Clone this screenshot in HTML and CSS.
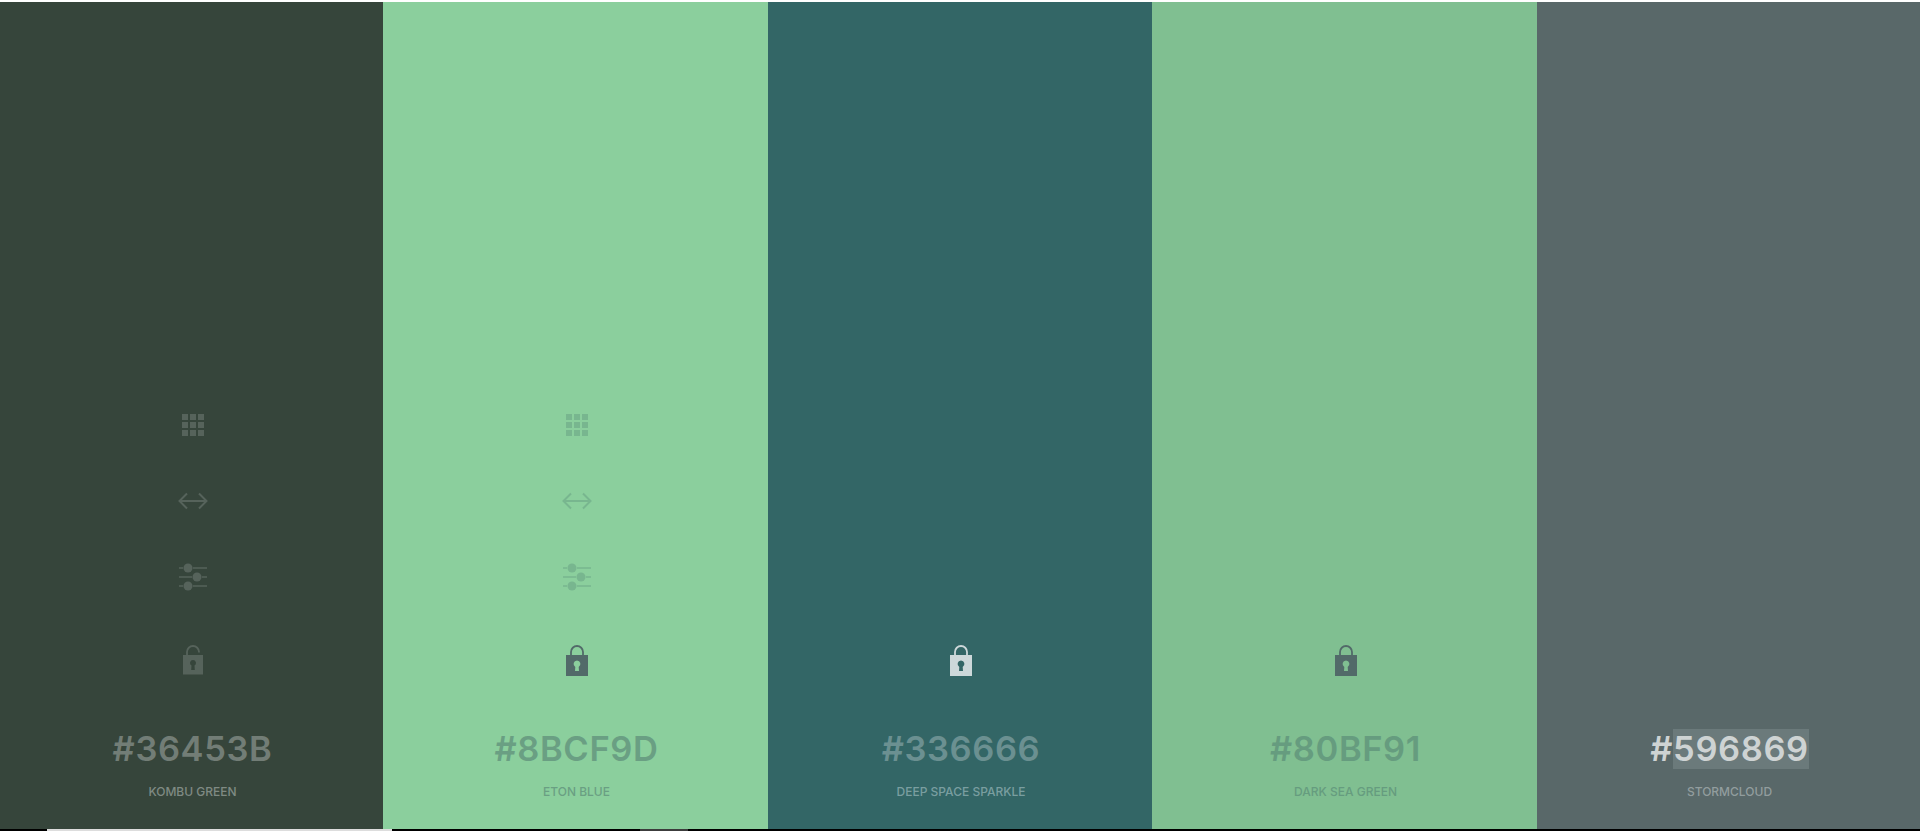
FILE: index.html
```html
<!DOCTYPE html>
<html lang="en">
<head>
    <meta charset="UTF-8">
    <meta name="viewport" content="width=device-width, initial-scale=1.0">
    <title>Palette</title>
    <link rel="stylesheet" href="styles.css">
</head>
<body>
    <svg class="defs" width="0" height="0" aria-hidden="true">
        <symbol id="i-grid" viewBox="0 0 22 22">
            <path d="M0 0h6v6H0zM8 0h6v6H8zM16 0h6v6h-6zM0 8h6v6H0zM8 8h6v6H8zM16 8h6v6h-6zM0 16h6v6H0zM8 16h6v6H8zM16 16h6v6h-6z"/>
        </symbol>
        <symbol id="i-arrows" viewBox="0 0 30 18">
            <path d="M9 1.500 1.500 9 9 16.500M21 1.500 28.500 9 21 16.500M1.500 9h27" fill="none" stroke="currentColor" stroke-width="2"/>
        </symbol>
        <symbol id="i-sliders" viewBox="0 0 28 28">
            <path d="M0 5h4M14 5h14M0 14h13M23 14h5M0 23h4M14 23h14" fill="none" stroke="currentColor" stroke-width="1.500"/>
            <circle cx="9" cy="5" r="4.500"/>
            <circle cx="18" cy="14" r="4.500"/>
            <circle cx="9" cy="23" r="4.500"/>
        </symbol>
        <symbol id="i-lock" viewBox="0 0 22 31">
            <path d="M5 11V7a6 6 0 0 1 12 0v4" fill="none" stroke="currentColor" stroke-width="1.800"/>
            <path fill-rule="evenodd" d="M0 10h22v21H0zM11 15.500a3.500 3.500 0 0 0-1.700 6.500L9 26h4l-.3-4a3.500 3.500 0 0 0-1.700-6.500z"/>
        </symbol>
        <symbol id="i-lock-open" viewBox="0 0 22 31">
            <path d="M5 10V7a6 6 0 0 1 12 0v.500" fill="none" stroke="currentColor" stroke-width="1.800"/>
            <path fill-rule="evenodd" d="M1 10h20v19.500H1zM11 15a3 3 0 0 0-1.500 5.600L9.200 25h3.600l-.3-4.400A3 3 0 0 0 11 15z"/>
        </symbol>
    </svg>

    <main class="palette">
        <section class="swatch kombu">
            <div class="tool"><svg class="ico grid"><use href="#i-grid"/></svg></div>
            <div class="tool"><svg class="ico arrows"><use href="#i-arrows"/></svg></div>
            <div class="tool"><svg class="ico sliders"><use href="#i-sliders"/></svg></div>
            <div class="tool lock-slot"><svg class="ico lock"><use href="#i-lock-open"/></svg></div>
            <h2 class="hex">#36453B</h2>
            <p class="name">KOMBU GREEN</p>
        </section>
        <section class="swatch eton">
            <div class="tool"><svg class="ico grid"><use href="#i-grid"/></svg></div>
            <div class="tool"><svg class="ico arrows"><use href="#i-arrows"/></svg></div>
            <div class="tool"><svg class="ico sliders"><use href="#i-sliders"/></svg></div>
            <div class="tool lock-slot"><svg class="ico lock locked"><use href="#i-lock"/></svg></div>
            <h2 class="hex">#8BCF9D</h2>
            <p class="name">ETON BLUE</p>
        </section>
        <section class="swatch deep">
            <div class="tool lock-slot"><svg class="ico lock locked"><use href="#i-lock"/></svg></div>
            <h2 class="hex">#336666</h2>
            <p class="name">DEEP SPACE SPARKLE</p>
        </section>
        <section class="swatch sea">
            <div class="tool lock-slot"><svg class="ico lock locked"><use href="#i-lock"/></svg></div>
            <h2 class="hex">#80BF91</h2>
            <p class="name">DARK SEA GREEN</p>
        </section>
        <section class="swatch storm">
            <h2 class="hex">#<span class="selected">596869</span></h2>
            <p class="name">STORMCLOUD</p>
        </section>
    </main>

    <div class="edge">
        <span class="edge-light"></span>
        <span class="edge-gap"></span>
        <span class="edge-grey"></span>
    </div>
</body>
</html>
```

FILE: styles.css
```css
html, body {
    height: 100%;
}
body {
    margin: 0;
    padding-top: 2px;
    box-sizing: border-box;
    display: flex;
    flex-direction: column;
    overflow: hidden;
    background-color: #fff;
    font-family: Inter, "Liberation Sans", sans-serif;
}
.defs {
    position: absolute;
}
.palette {
    flex: 1;
    display: grid;
    grid-template-columns: 383px 385px 384px 385px 383px;
}
.swatch {
    display: flex;
    flex-direction: column;
    align-items: center;
    justify-content: flex-end;
    padding: 0 0 27px 2px;
}
.kombu { background-color: #36453b; color: #56635b; }
.eton { background-color: #8bcf9d; color: #78b68f; }
.deep { background-color: #336666; }
.sea { background-color: #80bf91; }
.storm { background-color: #596869; }

.tool {
    height: 76px;
    display: flex;
    align-items: center;
    justify-content: center;
}
.lock-slot {
    height: 91px;
    margin-bottom: 23px;
}
.ico {
    display: block;
    fill: currentColor;
}
.grid { width: 22px; height: 22px; }
.arrows { width: 30px; height: 18px; }
.sliders { width: 28px; height: 28px; }
.lock { width: 22px; height: 31px; }

.eton .locked, .sea .locked { color: #526a69; }
.deep .locked { color: #cdd8da; }

.hex {
    margin: 0 0 13px;
    height: 40px;
    font-size: 34.500px;
    font-weight: 600;
    line-height: 40px;
    letter-spacing: 0.6px;
}
.name {
    margin: 0;
    font-size: 12px;
    font-weight: 500;
    line-height: 20px;
}
.kombu .hex { color: #727d76; }
.kombu .name { color: #7f8a83; }
.eton .hex, .eton .name { color: #6a9f83; }
.deep .hex { color: #6b9091; }
.deep .name { color: #7a9ea0; }
.sea .hex { color: #669c7f; }
.sea .name { color: #669c7f; }
.storm .hex { color: #ced3d3; }
.storm .name { color: #929d9e; }
.selected {
    display: inline-block;
    background-color: #6b7a7b;
}

.edge {
    height: 2px;
    display: flex;
    background-color: #000;
}
.edge-light {
    width: 345px;
    margin-left: 47px;
    background-color: #ddd;
}
.edge-gap {
    width: 248px;
}
.edge-grey {
    width: 48px;
    background-color: #3c3c3c;
}
```
